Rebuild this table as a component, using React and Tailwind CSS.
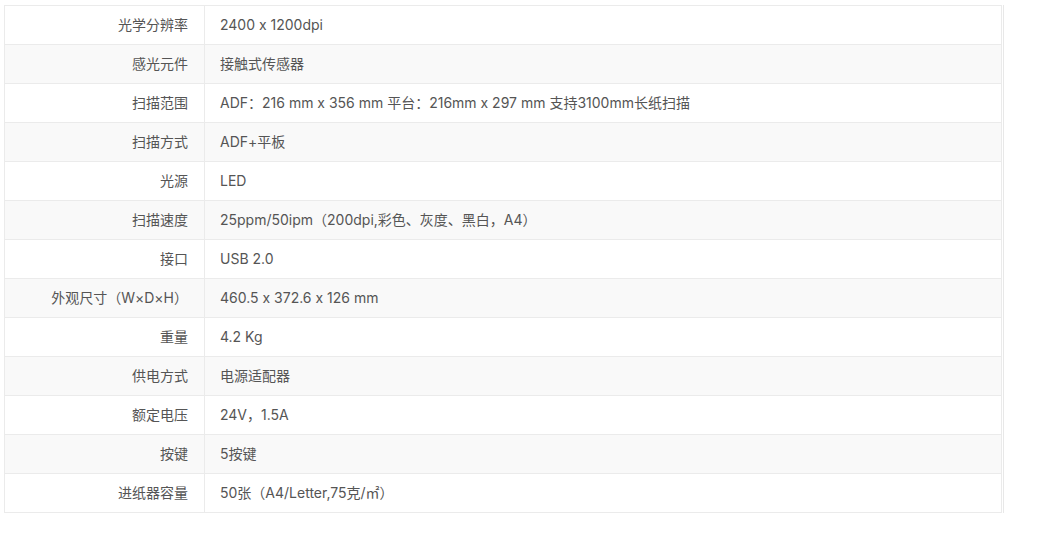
import React from "react";

const rows = [
  ["光学分辨率", "2400 x 1200dpi"],
  ["感光元件", "接触式传感器"],
  ["扫描范围", "ADF：216 mm x 356 mm 平台：216mm x 297 mm 支持3100mm长纸扫描"],
  ["扫描方式", "ADF+平板"],
  ["光源", "LED"],
  ["扫描速度", "25ppm/50ipm（200dpi,彩色、灰度、黑白，A4）"],
  ["接口", "USB 2.0"],
  ["外观尺寸（W×D×H）", "460.5 x 372.6 x 126 mm"],
  ["重量", "4.2 Kg"],
  ["供电方式", "电源适配器"],
  ["额定电压", "24V，1.5A"],
  ["按键", "5按键"],
  ["进纸器容量", "50张（A4/Letter,75克/㎡）"],
];

export default function App() {
  return (
    <div
      className="w-[1060px] h-[542px] bg-white pt-[5px] pl-[4px] [font-feature-settings:'calt'_0]"
      style={{ fontFamily: 'Inter, "Noto Sans CJK SC", sans-serif' }}
    >
      <div className="w-[1000px] border-r border-[#e8e8e8] pr-[1px]">
        <div className="w-[998px] border-l border-t border-[#ebebeb]">
          {rows.map(([k, v], i) => (
            <div
              key={i}
              className={`flex h-[39px] border-b border-r border-[#ebebeb] ${i % 2 === 1 ? "bg-[#f9f9f9]" : "bg-white"}`}
            >
              <div className="w-[200px] shrink-0 border-r border-[#ebebeb] flex items-center justify-end pr-[16px] text-[14px] leading-[20px] text-[#555]">
                {k}
              </div>
              <div className="flex-1 flex items-center pl-[15px] text-[14px] leading-[20px] text-[#555]">
                {v}
              </div>
            </div>
          ))}
        </div>
      </div>
    </div>
  );
}
